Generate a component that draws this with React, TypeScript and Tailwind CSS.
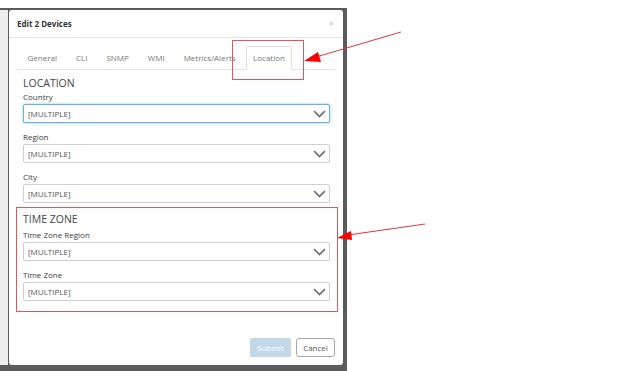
import React from "react";

const font = { fontFamily: '"Open Sans", "Noto Sans", sans-serif' };

function Chevron() {
  return (
    <svg width="13" height="8" viewBox="0 0 13 8" className="absolute right-[3px] top-[5px]">
      <path d="M1 1 L6.5 6.5 L12 1" fill="none" stroke="#6b6b6b" strokeWidth="1.7" />
    </svg>
  );
}

function Select({ focused = false }: { focused?: boolean }) {
  return (
    <div
      className={
        "relative h-[19px] rounded-[2px] border bg-white pl-[4px] text-[8px] leading-[17px] text-[#555] " +
        (focused ? "border-[#66afe9] shadow-[0_0_3px_rgba(102,175,233,0.7)]" : "border-[#cfcfcf]")
      }
    >
      [MULTIPLE]
      <Chevron />
    </div>
  );
}

function Label({ text, mt }: { text: string; mt: string }) {
  return <div className={`${mt} h-[14px] text-[8px] leading-[14px] text-[#3a3a3a]`}>{text}</div>;
}

export default function App() {
  const tabs = ["General", "CLI", "SNMP", "WMI", "Metrics/Alerts"];
  return (
    <div className="relative h-[371px] w-[623px] overflow-hidden bg-white" style={font}>
      <div className="mt-[8px] flex h-[363px] w-[347px] flex-col bg-[#5b5b5b]">
        <div className="mt-[2px] flex h-[355px]">
          <div className="w-[8px] bg-[#ededed]" />
          <div className="ml-[1px] flex h-[355px] w-[334px] flex-col rounded-[3px] bg-white">
            {/* header */}
            <div className="flex h-[28px] items-center justify-between border-b border-[#e5e5e5] pl-[8px] pr-[9px]">
              <span className="text-[8px] font-bold text-[#333]">Edit 2 Devices</span>
              <span className="text-[9px] leading-none text-[#c0c0c0]">×</span>
            </div>
            {/* tabs */}
            <div className="mx-[8px] mt-[8px] flex h-[24px] items-end border-b border-[#e3e3e3] pl-[1px]">
              {tabs.map((t) => (
                <div key={t} className="h-[23px] px-[9.5px] text-[8px] leading-[23px] text-[#777]">
                  {t}
                </div>
              ))}
              <div className="-mb-px ml-[1px] h-[24px] border border-b-white border-[#e0e0e0] bg-white px-[6px] text-[8px] leading-[22px] text-[#777]">
                Location
              </div>
            </div>
            {/* body */}
            <div className="pl-[14px] pr-[13px]">
              <div className="mt-[6px] h-[14px] text-[10.5px] leading-[14px] text-[#444]">LOCATION</div>
              <Label text="Country" mt="mt-0" />
              <Select focused />
              <Label text="Region" mt="mt-[7px]" />
              <Select />
              <Label text="City" mt="mt-[7px]" />
              <Select />
              <div className="mt-[8px] h-[16px] text-[10.5px] leading-[16px] text-[#444]">TIME ZONE</div>
              <Label text="Time Zone Region" mt="mt-[1px]" />
              <Select />
              <Label text="Time Zone" mt="mt-[7px]" />
              <Select />
              <div className="-mr-[5px] mt-[37px] flex justify-end gap-[5px]">
                <div className="h-[19px] w-[41px] rounded-[2px] bg-[#c3d7e7] text-center text-[8px] leading-[19px] text-white">
                  Submit
                </div>
                <div className="h-[19px] w-[39px] rounded-[3px] border border-[#a9a9a9] text-center text-[8px] leading-[17px] text-[#555]">
                  Cancel
                </div>
              </div>
            </div>
          </div>
        </div>
      </div>

      {/* annotation boxes */}
      <div className="absolute left-[232px] top-[40px] h-[40px] w-[72px] border border-[#e3555a]" />
      <div className="absolute left-[16px] top-[207px] h-[105px] w-[322px] border border-[#e3555a]" />

      {/* arrows */}
      <svg className="absolute left-0 top-0" width="623" height="371" viewBox="0 0 623 371">
        <line x1="401" y1="32" x2="316" y2="57" stroke="#e8333a" strokeWidth="1" />
        <polygon points="304,61 318,52 321,62" fill="#ff0000" />
        <line x1="425" y1="224" x2="348" y2="235" stroke="#e8333a" strokeWidth="1" />
        <polygon points="337,238 351,231 352,240" fill="#ff0000" />
      </svg>
    </div>
  );
}
